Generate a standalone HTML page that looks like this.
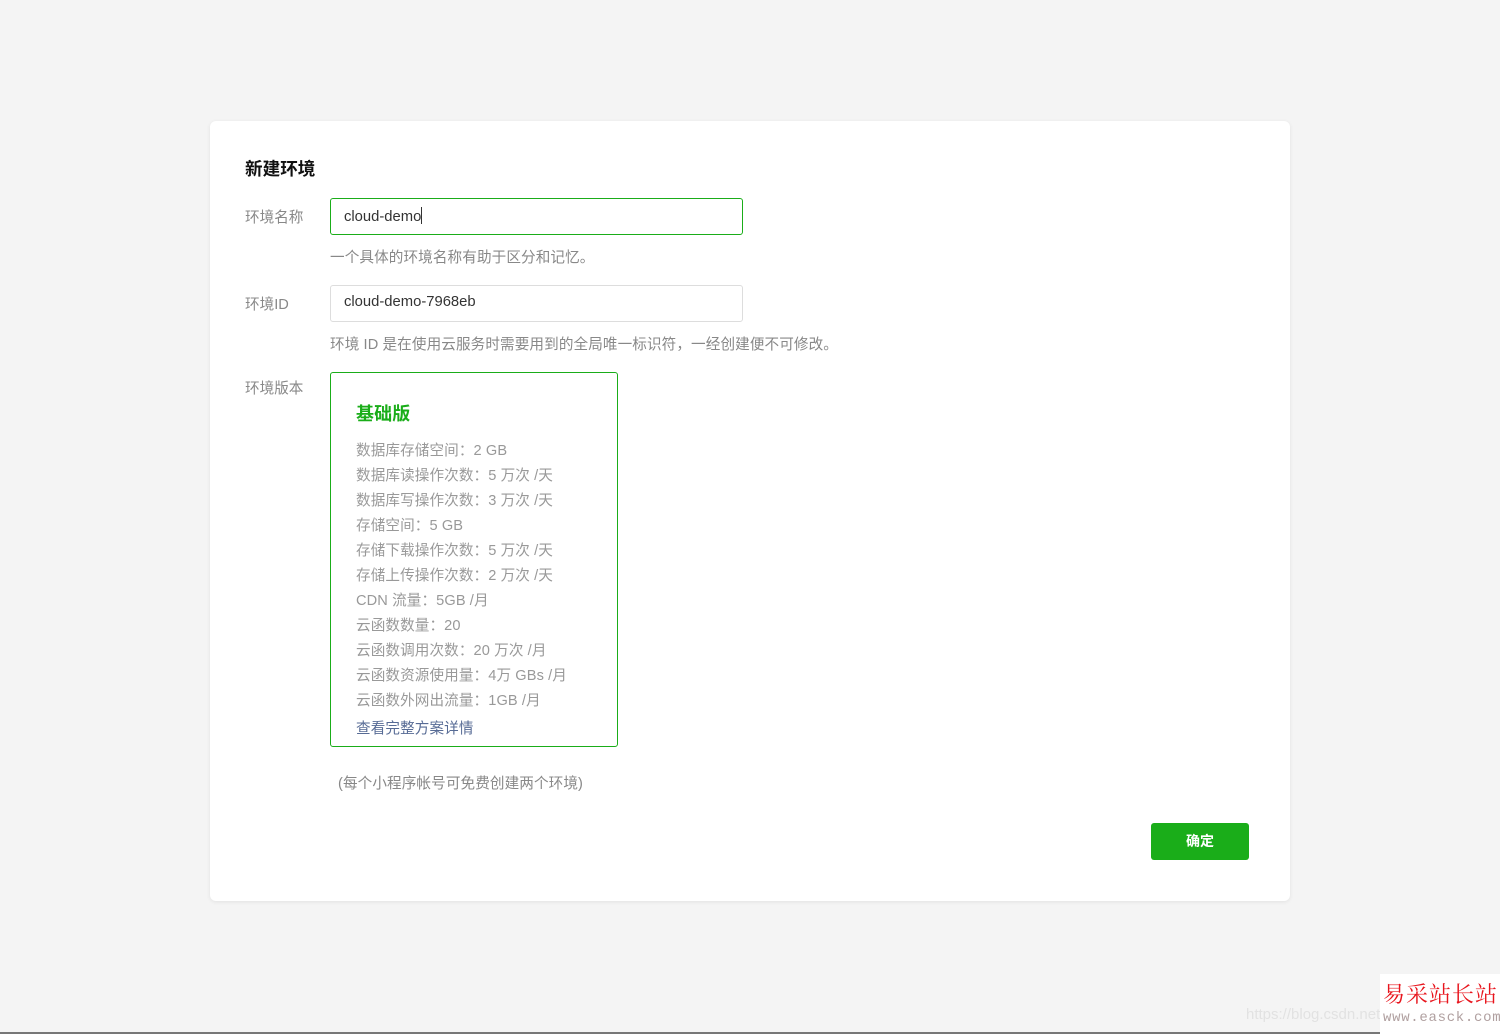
<!DOCTYPE html>
<html><head><meta charset="utf-8"><style>
*{box-sizing:border-box;margin:0;padding:0}
body{width:1500px;height:1034px;background:#f4f4f4;font-family:"Liberation Sans","Noto Sans CJK SC",sans-serif;position:relative;overflow:hidden}
.card{position:absolute;left:210px;top:121px;width:1080px;height:780px;background:#fff;border-radius:6px;box-shadow:0 1px 4px rgba(0,0,0,.08)}
.t{position:absolute;white-space:nowrap}
h1{position:absolute;left:35px;top:35px;font-size:17.6px;font-weight:bold;color:#111}
.lab{font-size:14.6px;color:#888}
.inp{position:absolute;left:120px;width:413px;height:37px;border:1px solid #ddd;border-radius:3px;font-size:14.8px;color:#333;padding:8px 13px}
.tip{font-size:14.6px;color:#888;letter-spacing:.1px}
.box{position:absolute;left:120px;top:251px;width:288px;height:375px;border:1px solid #1aad19;border-radius:3px}
.box .ln{position:absolute;left:25px;font-size:14.6px;color:#999;white-space:nowrap;letter-spacing:.1px}
.btn{position:absolute;left:941px;top:702px;width:98px;height:37px;background:#1aad19;border-radius:3px;color:#fff;font-size:14px;font-weight:bold;text-align:center;line-height:37px}
</style></head><body>
<div class="card">
<h1>新建环境</h1>
<div class="t lab" style="left:35px;top:85px">环境名称</div>
<div class="inp" style="top:77px;border-color:#1aad19">cloud-demo<span style="display:inline-block;width:1px;height:17px;background:#333;vertical-align:-3px"></span></div>
<div class="t tip" style="left:120px;top:125px">一个具体的环境名称有助于区分和记忆。</div>
<div class="t lab" style="left:35px;top:172px">环境ID</div>
<div class="inp" style="top:164px">cloud-demo-7968eb</div>
<div class="t tip" style="left:120px;top:212px">环境 ID 是在使用云服务时需要用到的全局唯一标识符，一经创建便不可修改。</div>
<div class="t lab" style="left:35px;top:256px">环境版本</div>
<div class="box">
<div class="ln" style="top:27px;font-size:18px;font-weight:bold;color:#1aad19">基础版</div>
<div class="ln" style="top:66px">数据库存储空间：2 GB</div>
<div class="ln" style="top:91px">数据库读操作次数：5 万次 /天</div>
<div class="ln" style="top:116px">数据库写操作次数：3 万次 /天</div>
<div class="ln" style="top:141px">存储空间：5 GB</div>
<div class="ln" style="top:166px">存储下载操作次数：5 万次 /天</div>
<div class="ln" style="top:191px">存储上传操作次数：2 万次 /天</div>
<div class="ln" style="top:216px">CDN 流量：5GB /月</div>
<div class="ln" style="top:241px">云函数数量：20</div>
<div class="ln" style="top:266px">云函数调用次数：20 万次 /月</div>
<div class="ln" style="top:291px">云函数资源使用量：4万 GBs /月</div>
<div class="ln" style="top:316px">云函数外网出流量：1GB /月</div>
<div class="ln" style="top:344px;color:#576b95">查看完整方案详情</div>
</div>
<div class="t tip" style="left:128px;top:651px">(每个小程序帐号可免费创建两个环境)</div>
<div class="btn">确定</div>
</div>
<div class="t" style="left:1246px;top:1006px;font-size:15px;color:#e2e2e2">https://blog.csdn.net</div>
<div style="position:absolute;left:1380px;top:974px;width:120px;height:60px;background:#fff"></div>
<div class="t" style="left:1383px;top:978px;font-size:22px;color:#e8141c;font-family:'Liberation Serif','Noto Serif CJK SC',serif;letter-spacing:1px">易采站长站</div>
<div class="t" style="left:1383px;top:1010px;font-size:14px;color:#b0a0a0;font-family:'Liberation Mono',monospace;letter-spacing:.7px">www.easck.com</div>
<div style="position:absolute;left:0;top:1032px;width:1380px;height:2px;background:#777"></div>
</body></html>
